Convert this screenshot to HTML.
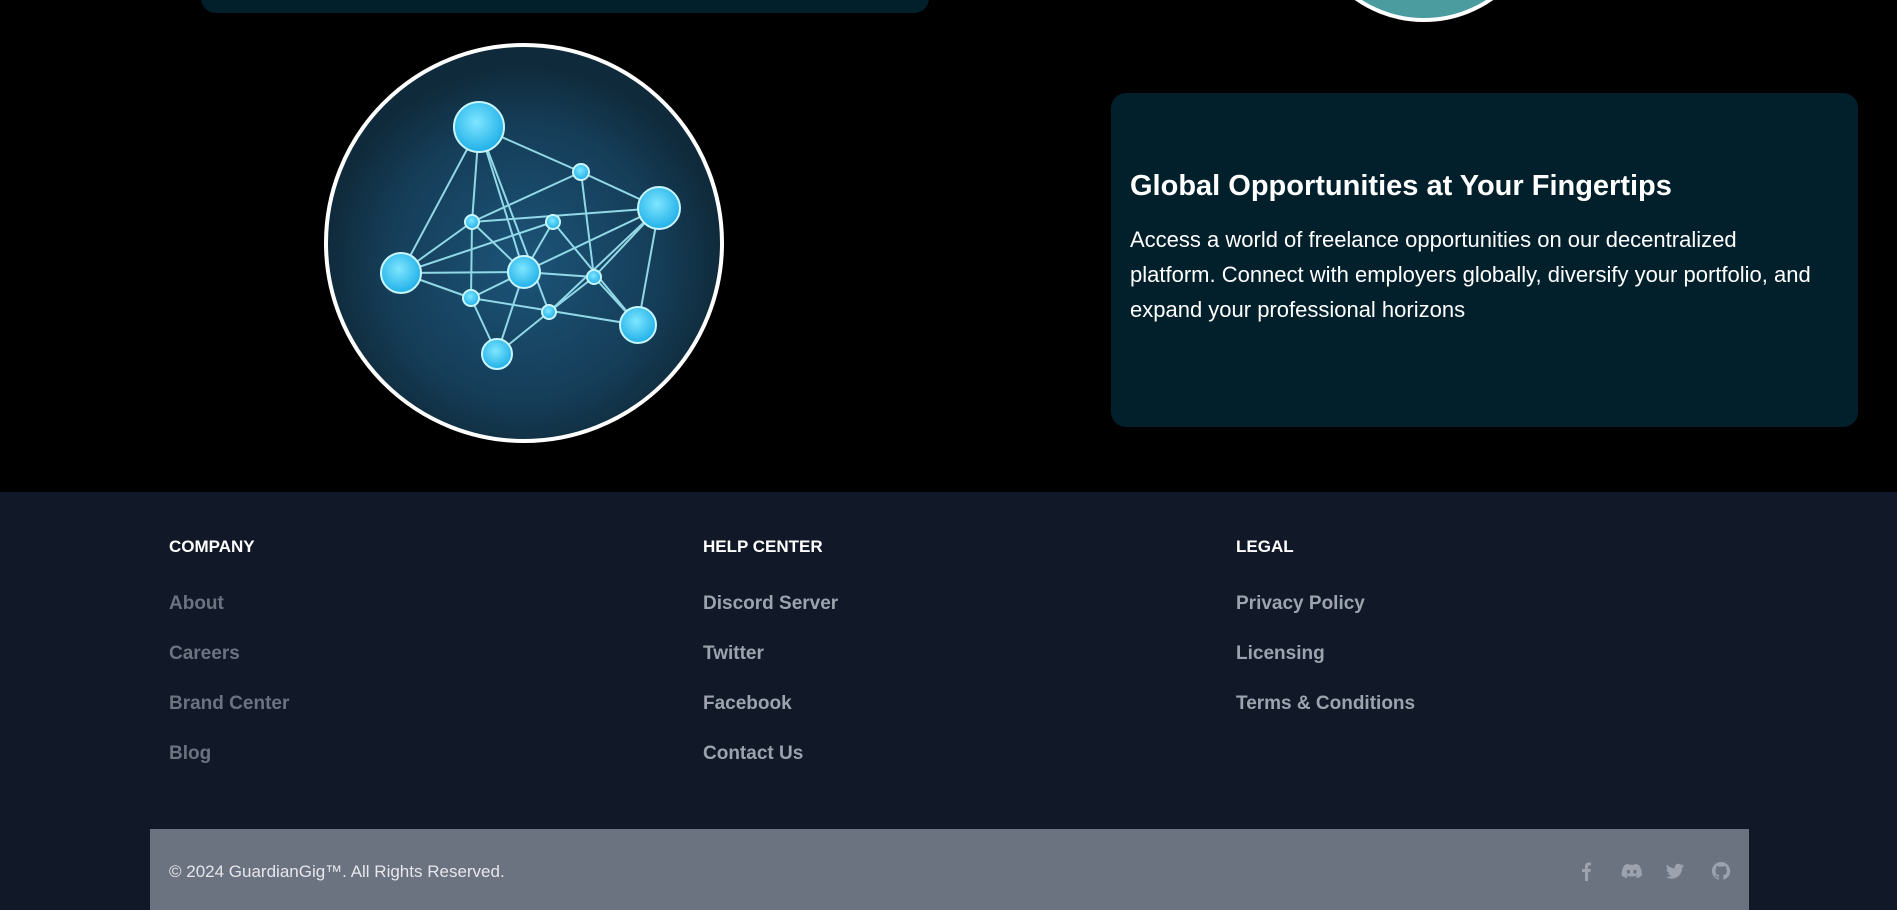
<!DOCTYPE html>
<html><head><meta charset="utf-8"><style>
*{margin:0;padding:0;box-sizing:border-box}
body{width:1897px;height:910px;background:#000;position:relative;overflow:hidden;font-family:"Liberation Sans",sans-serif}
.abs{position:absolute}
.card{background:#02202b}
.h{color:#fff;font-size:17px;font-weight:bold;top:537px}
.l{font-size:19px;font-weight:bold;position:absolute}
.c1{color:#6b7280}.c2{color:#9ca3af}
</style></head><body>
<div class="abs card" style="left:201px;top:-20px;width:728px;height:33px;border-radius:15px"></div>
<div class="abs" style="left:1304px;top:-218px;width:240px;height:240px;border-radius:50%;background:#4a9c9e;border:4px solid #fff"></div>

<svg class="abs" style="left:322px;top:41px" width="404" height="404" viewBox="322 41 404 404">
<defs><radialGradient id="g" cx="0.5" cy="0.55" r="0.5"><stop offset="0" stop-color="#1c5478"/><stop offset="0.7" stop-color="#153d58"/><stop offset="1" stop-color="#0f2a3a"/></radialGradient>
<radialGradient id="n" cx="0.45" cy="0.4" r="0.6"><stop offset="0" stop-color="#7fe6ff"/><stop offset="1" stop-color="#20b0e8"/></radialGradient></defs>
<circle cx="524" cy="243" r="198" fill="url(#g)" stroke="#fff" stroke-width="4"/>
<g stroke="#9fe8f5" stroke-width="2" fill="none" opacity="0.9">
<path d="M479 127L581 172M479 127L401 273M479 127L472 222M479 127L524 272M479 127L549 312M581 172L659 208M581 172L472 222M581 172L594 277M472 222L659 208M472 222L401 273M472 222L524 272M472 222L471 298M553 222L401 273M553 222L524 272M553 222L638 325M401 273L524 272M401 273L471 298M524 272L659 208M524 272L594 277M524 272L497 354M524 272L471 298M594 277L659 208M594 277L549 312M659 208L638 325M659 208L549 312M471 298L497 354M471 298L638 325M549 312L497 354M594 277L638 325"/>
</g>
<g fill="url(#n)" stroke="#c8f6ff" stroke-width="2">
<circle cx="479" cy="127" r="25"/><circle cx="581" cy="172" r="8"/><circle cx="659" cy="208" r="21"/>
<circle cx="472" cy="222" r="7"/><circle cx="553" cy="222" r="7"/><circle cx="401" cy="273" r="20"/>
<circle cx="524" cy="272" r="16"/><circle cx="594" cy="277" r="7"/><circle cx="471" cy="298" r="8"/>
<circle cx="549" cy="312" r="7"/><circle cx="638" cy="325" r="18"/><circle cx="497" cy="354" r="15"/>
</g></svg>

<div class="abs card" style="left:1111px;top:93px;width:747px;height:334px;border-radius:15px;padding:76px 10px 0 19px;color:#fff">
<div style="font-size:29px;font-weight:bold;line-height:34px">Global Opportunities at Your Fingertips</div>
<div style="font-size:22px;line-height:35px;margin-top:19px;white-space:nowrap">Access a world of freelance opportunities on our decentralized<br>platform. Connect with employers globally, diversify your portfolio, and<br>expand your professional horizons</div>
</div>

<div class="abs" style="left:0;top:492px;width:1897px;height:418px;background:#111827"></div>
<div class="abs h" style="left:169px">COMPANY</div>
<div class="abs h" style="left:703px">HELP CENTER</div>
<div class="abs h" style="left:1236px">LEGAL</div>
<div class="l c1" style="left:169px;top:593px">About</div>
<div class="l c1" style="left:169px;top:643px">Careers</div>
<div class="l c1" style="left:169px;top:693px">Brand Center</div>
<div class="l c1" style="left:169px;top:743px">Blog</div>
<div class="l c2" style="left:703px;top:593px">Discord Server</div>
<div class="l c2" style="left:703px;top:643px">Twitter</div>
<div class="l c2" style="left:703px;top:693px">Facebook</div>
<div class="l c2" style="left:703px;top:743px">Contact Us</div>
<div class="l c2" style="left:1236px;top:593px">Privacy Policy</div>
<div class="l c2" style="left:1236px;top:643px">Licensing</div>
<div class="l c2" style="left:1236px;top:693px">Terms &amp; Conditions</div>

<div class="abs" style="left:150px;top:829px;width:1599px;height:81px;background:#6b7280">
<div class="abs" style="left:19px;top:33px;font-size:17px;color:#e5e7eb">© 2024 GuardianGig™. All Rights Reserved.</div>
<svg class="abs" style="left:1425px;top:31px" width="160" height="22" viewBox="0 0 160 22" fill="#9ca3af">
<path d="M10 21V12H7V9H10V6.5C10 3.8 11.5 2.5 14 2.5L16 2.6V5.3H14.7C13.4 5.3 13.1 6 13.1 6.8V9H16L15.5 12H13.1V21Z"/>
<g transform="translate(11 0)"><path d="M53 5C51.5 4.3 50 3.9 48.6 3.7L48 4.9C46.5 4.7 45 4.7 43.5 4.9L42.9 3.7C41.4 3.9 40 4.3 38.5 5C36 8.7 35.4 12.3 35.7 15.8 37.4 17 39 17.7 40.6 18.2L41.7 16.5C41.1 16.3 40.6 16 40.1 15.7L40.5 15.4C43.7 16.9 47.8 16.9 51 15.4L51.4 15.7C50.9 16 50.4 16.3 49.8 16.5L50.9 18.2C52.5 17.7 54.1 17 55.8 15.8 56.2 11.7 55.1 8.2 53 5ZM42.5 13.7C41.5 13.7 40.8 12.8 40.8 11.7 40.8 10.6 41.5 9.7 42.5 9.7 43.5 9.7 44.2 10.6 44.2 11.7 44.2 12.8 43.5 13.7 42.5 13.7ZM49 13.7C48 13.7 47.3 12.8 47.3 11.7 47.3 10.6 48 9.7 49 9.7 50 9.7 50.7 10.6 50.7 11.7 50.7 12.8 50 13.7 49 13.7Z"/></g>
<g transform="translate(9 0)"><path d="M100 5.5C99.3 5.8 98.6 6 97.8 6.1 98.6 5.6 99.2 4.9 99.4 4 98.7 4.4 97.9 4.7 97 4.9 95.6 3.4 93.1 3.4 91.7 4.9 90.8 5.8 90.4 7.1 90.7 8.4 87.7 8.2 85 6.8 83.1 4.5 82.1 6.2 82.6 8.4 84.2 9.5 83.6 9.5 83 9.3 82.5 9 82.5 10.8 83.8 12.3 85.5 12.7 85 12.8 84.4 12.9 83.8 12.8 84.3 14.3 85.7 15.4 87.3 15.4 85.8 16.6 83.9 17.2 82 17 83.7 18.1 85.6 18.6 87.6 18.6 94.4 18.6 98.2 13 98.1 7.9 98.8 7.3 99.5 6.5 100 5.5Z"/></g>
<g transform="translate(5 0)"><path d="M141 2C136 2 132 6 132 11C132 15 134.6 18.4 138.2 19.6 138.7 19.7 138.8 19.4 138.8 19.2V17.6C136.3 18.1 135.8 16.5 135.8 16.5 135.4 15.5 134.8 15.2 134.8 15.2 134 14.6 134.9 14.7 134.9 14.7 135.8 14.7 136.3 15.6 136.3 15.6 137.1 17 138.4 16.6 138.9 16.4 139 15.8 139.2 15.4 139.5 15.2 137.5 15 135.4 14.2 135.4 10.7 135.4 9.7 135.8 8.9 136.4 8.3 136.3 8.1 136 7.1 136.5 5.9 136.5 5.9 137.3 5.7 139 6.8 139.7 6.6 140.4 6.5 141.2 6.5 141.9 6.5 142.7 6.6 143.4 6.8 145.1 5.7 145.8 5.9 145.8 5.9 146.3 7.1 146 8.1 145.9 8.3 146.5 8.9 146.9 9.7 146.9 10.7 146.9 14.2 144.8 15 142.8 15.2 143.1 15.5 143.4 16 143.4 16.8V19.2C143.4 19.4 143.5 19.7 144 19.6 147.6 18.4 150.2 15 150.2 11 150 6 146 2 141 2Z"/></g>
</svg>
</div>
</body></html>
